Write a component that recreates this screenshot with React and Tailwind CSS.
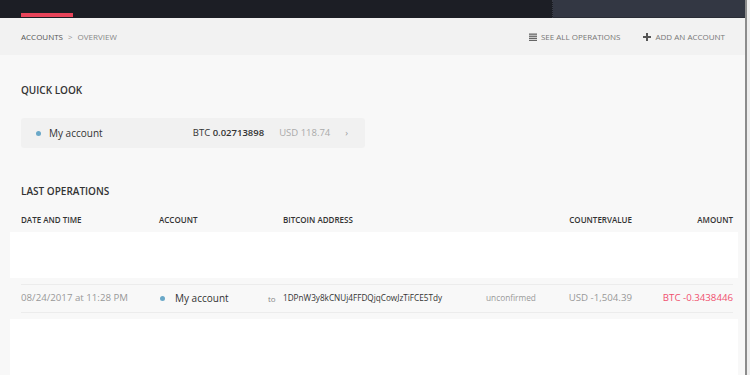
import React from 'react';

const font = { fontFamily: '"Open Sans", "Noto Sans", sans-serif' };

function ListIcon() {
  return (
    <svg width="8" height="8" viewBox="0 0 8 8" className="mr-[4px]">
      <rect x="0" y="0.5" width="8" height="1.3" fill="#666" />
      <rect x="0" y="2.6" width="8" height="1.3" fill="#666" />
      <rect x="0" y="4.7" width="8" height="1.3" fill="#666" />
      <rect x="0" y="6.8" width="8" height="1.2" fill="#666" />
    </svg>
  );
}

function PlusIcon() {
  return (
    <svg width="8" height="8" viewBox="0 0 8 8" className="mr-[4px]">
      <rect x="3" y="0" width="2" height="8" fill="#555" />
      <rect x="0" y="3" width="8" height="2" fill="#555" />
    </svg>
  );
}

export default function App() {
  return (
    <div className="flex w-[750px] h-[375px] overflow-hidden bg-[#f7f7f7]" style={font}>
      <div className="w-[745px] flex flex-col bg-[#f8f8f8]">
        {/* top bar */}
        <div className="h-[18px] flex shrink-0">
          <div className="w-[553px] bg-[#1c1e25] flex items-end pl-[21px] border-r border-dotted border-[#3a3d47]">
            <div className="w-[52px] h-[4px] bg-[#e8445a] mb-[1px]" />
          </div>
          <div className="flex-1 bg-[#333743] border-b border-[#2a2d36]" />
        </div>

        {/* breadcrumb */}
        <div className="h-[37px] bg-[#f2f2f2] flex items-center justify-between pl-[21px] pr-[20px] text-[8px] uppercase shrink-0">
          <div className="flex items-center">
            <span className="text-[#555]">Accounts</span>
            <span className="text-[#999] mx-[5px]">&gt;</span>
            <span className="text-[#888]">Overview</span>
          </div>
          <div className="flex items-center text-[#777]">
            <span className="flex items-center"><ListIcon />See all operations</span>
            <span className="flex items-center ml-[23px]"><PlusIcon />Add an account</span>
          </div>
        </div>

        {/* quick look */}
        <div className="px-[21px] pt-[28px] text-[10px] font-semibold text-[#333] uppercase leading-[14px]">Quick look</div>
        <div className="mx-[21px] mt-[21px] w-[344px] h-[30px] rounded-[3px] bg-[#f1f1f1] flex items-center pl-[15px] pr-[17px] text-[10px]">
          <span className="w-[5px] h-[5px] rounded-full bg-[#6aa8c8]" />
          <span className="ml-[8px] text-[#333]">My account</span>
          <span className="ml-auto text-[#333] text-[9.5px]">BTC <span className="font-semibold">0.02713898</span></span>
          <span className="ml-[15px] text-[#aaa] text-[9.5px]">USD 118.74</span>
          <span className="ml-[15px] text-[#999] text-[9px]">&#8250;</span>
        </div>

        {/* last operations */}
        <div className="px-[21px] pt-[36px] text-[10px] font-semibold text-[#333] uppercase leading-[14px]">Last operations</div>
        <div className="flex items-center pl-[21px] pr-[12px] mt-[15px] h-[14px] text-[8px] font-semibold text-[#333] uppercase">
          <span className="w-[138px]">Date and time</span>
          <span className="w-[124px]">Account</span>
          <span className="flex-1">Bitcoin address</span>
          <span>Countervalue</span>
          <span className="w-[101px] text-right">Amount</span>
        </div>
        <div className="mt-[5px] ml-[10px] w-[728px] h-[46px] bg-white shrink-0" />
        <div className="h-[41px] pl-[21px] pr-[12px] pt-[6px] shrink-0">
          <div className="h-[29px] border-y border-[#ececec] flex items-center text-[9.7px]">
            <span className="w-[138px] text-[#999]">08/24/2017 at 11:28 PM</span>
            <span className="w-[109px] flex items-center">
              <span className="w-[5px] h-[5px] rounded-full bg-[#6aa8c8] ml-[1px]" />
              <span className="ml-[10px] text-[10px] text-[#333]">My account</span>
            </span>
            <span className="w-[15px] text-[8px] text-[#888]">to</span>
            <span className="w-[203px] text-[8.2px] text-[#333]">1DPnW3y8kCNUj4FFDQjqCowJzTiFCE5Tdy</span>
            <span className="flex-1 text-[8.3px] text-[#999]">unconfirmed</span>
            <span className="text-[#999]">USD -1,504.39</span>
            <span className="w-[101px] text-right text-[#f0506e]">BTC -0.3438446</span>
          </div>
        </div>
        <div className="ml-[10px] w-[728px] flex-1 bg-white" />
      </div>
      <div className="w-[2px] bg-[#8c8c8c]" />
      <div className="flex-1 bg-[#eeeeee]" />
    </div>
  );
}
